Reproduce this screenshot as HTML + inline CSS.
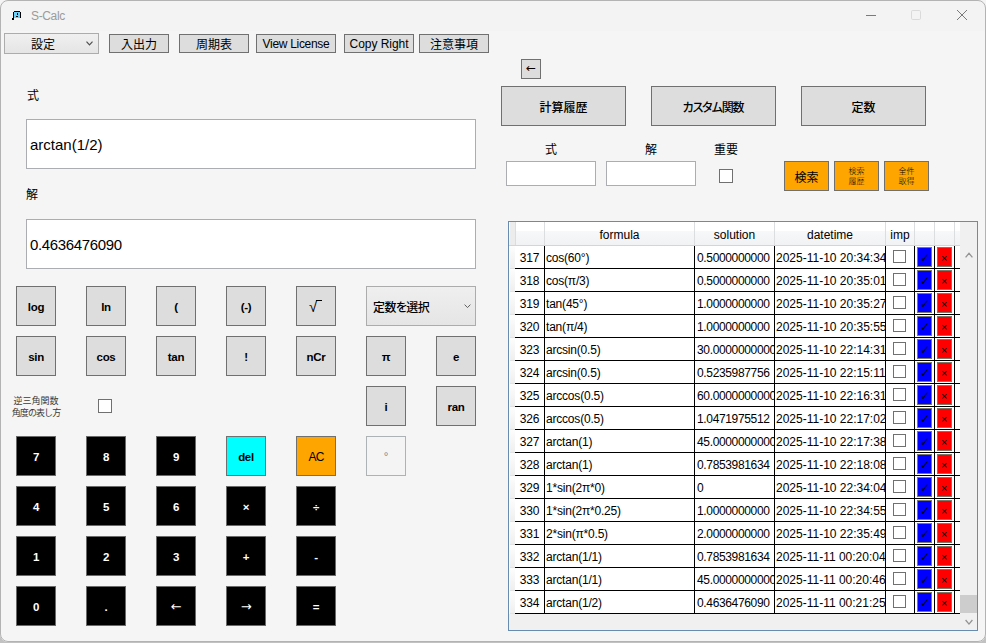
<!DOCTYPE html>
<html lang="ja"><head><meta charset="utf-8"><title>S-Calc</title>
<style>
*{box-sizing:border-box;margin:0;padding:0}
html,body{width:986px;height:643px;overflow:hidden;background:#f4f4f4}
body{font-family:"Liberation Sans","Noto Sans CJK JP",sans-serif;font-size:12px;color:#000;position:relative}
#win{position:absolute;left:0;top:0;width:986px;height:642px;background:#f5f5f5;border-radius:8px;overflow:hidden}
#frame{position:absolute;left:0;top:0;width:986px;height:642px;border:1px solid #b3b3b3;border-radius:8px;pointer-events:none}
#under{position:absolute;left:0;top:633px;width:986px;height:10px;background:#c2c2c2}
#tbar{position:absolute;left:0;top:0;width:986px;height:31px;background:#f3f3f3}
.abs{position:absolute}
#title{position:absolute;left:31px;top:8px;font-size:12px;color:#9b9b9b;line-height:16px;letter-spacing:-0.35px}
.btn{position:absolute;border:1px solid #707070;background:#ddd;display:flex;align-items:center;justify-content:center;white-space:nowrap;line-height:1}
.k{width:40px;height:40px;font-weight:bold;font-size:11.5px;letter-spacing:-0.3px;padding-top:4px}
.ar{font-family:'DejaVu Sans',sans-serif;font-weight:normal;font-size:13px;position:relative;top:-2px}
.blk{background:#000;color:#fff;border-color:#6a6a6a}
.combo{position:absolute;border:1px solid #acacac;background:linear-gradient(#f0f0f0,#e5e5e5)}
.tb{position:absolute;border:1px solid #abadb3;background:#fff;display:flex;align-items:center;white-space:nowrap}
.lbl{position:absolute;white-space:nowrap;line-height:1}
.chk{position:absolute;width:14px;height:14px;border:1px solid #707070;background:#fff}
.or{background:#ffa500}
.sm{font-size:8px;line-height:10px;text-align:center;color:#000;padding-top:2px;font-weight:300}
#dg{position:absolute;left:508px;top:221px;width:470px;height:410px;border:1px solid #688caf;background:#f0f0f0;overflow:hidden}
#dg .hdr{position:absolute;left:0;top:0;height:24px;width:451px;background:linear-gradient(#fff 0%,#fff 40.9%,#f7f8fa 40.9%,#f1f2f4 100%);border-bottom:1px solid #d5d5d5}
#dg .h{position:absolute;top:0;height:23px;border-right:1px solid #dcdddf;display:flex;align-items:center;justify-content:center;font-size:12px;line-height:1;padding-top:2px}
.row{position:absolute;left:0;height:23px;width:451px;background:#fff}
.row .rh{position:absolute;left:1px;top:0;width:5px;height:23px;background:linear-gradient(#fdfdfd,#efefef);border-bottom:1px solid #e2e2e2}
.row .c{position:absolute;top:0;height:23px;border-right:1px solid #000;border-bottom:1px solid #000;background:#fff;font-size:12px;line-height:23px;padding-top:1px;white-space:nowrap;overflow:hidden;letter-spacing:-0.2px}
.row .c0{left:6px;width:30px;text-align:center}
.row .c1{left:36px;width:150px;padding-left:1px}
.row .c2{left:186px;width:80px;padding-left:2px;letter-spacing:-0.35px}
.row .c3{left:266px;width:111px;padding-left:1px;letter-spacing:0}
.row .c4{left:377px;width:29px}
.row .c5{left:406px;width:20px}
.row .c6{left:426px;width:20px}
.row .c7{left:446px;width:5px;border-right:0}
.cb{position:absolute;left:7px;top:4px;width:13px;height:13px;border:1px solid #707070;background:#fff}
.bl,.rd{position:absolute;left:2px;top:1px;width:15px;height:20px;border:1px solid #7a7a6a;display:block}
.bl{background:#0000ff}.rd{background:#ff0000}
.bl u,.rd u{position:absolute;text-decoration:none;font-weight:normal;line-height:1;letter-spacing:0}
.bl u{font-family:'DejaVu Sans',sans-serif;font-size:12px;left:2px;top:4px}
.rd u{font-size:11px;left:3px;top:5px}
#vsb{position:absolute;left:451px;top:0;width:17px;height:408px;background:#f0f0f0}
#thumb{position:absolute;left:0;top:373px;width:17px;height:18px;background:#cdcdcd}
</style></head>
<body>
<div id="under"></div>
<div id="win">
<div id="tbar"></div>
<svg class="abs" style="left:12px;top:11px" width="10" height="10" viewBox="0 0 10 10" shape-rendering="crispEdges"><rect x="2" y="1" width="6" height="6.4" fill="#6dcff6"/><rect x="2" y="0" width="6" height="1" fill="#000"/><rect x="1" y="1" width="1" height="7" fill="#000"/><rect x="8" y="1" width="1" height="6" fill="#000"/><rect x="0" y="7.4" width="2" height="1.8" fill="#000"/><rect x="5" y="2.3" width="1" height="1.4" fill="#000"/><rect x="4" y="5" width="2" height="1" fill="#000"/></svg>
<div id="title">S-Calc</div>
<svg class="abs" style="left:866px;top:9px" width="110" height="14" viewBox="0 0 110 14"><path d="M0 6.5 H10" stroke="#7a7a7a" stroke-width="1" fill="none"/><rect x="45.5" y="1.5" width="9" height="9" rx="1.2" fill="none" stroke="#dadada" stroke-width="1"/><path d="M91 1 L101 11 M101 1 L91 11" stroke="#7a7a7a" stroke-width="1" fill="none"/></svg>

<!-- toolbar -->
<div class="combo" style="left:4px;top:33px;width:95px;height:21px"><span style="position:absolute;left:0;width:76px;text-align:center;font-size:12px;line-height:19px;top:2px">設定</span><svg class="abs" style="left:81px;top:7px" width="7" height="5" viewBox="0 0 7 5"><path d="M0.5 0.6 L3.5 3.8 L6.5 0.6" fill="none" stroke="#505050" stroke-width="1.2"/></svg></div>
<div class="btn" style="left:109px;top:34px;width:60px;height:19px;padding-top:2px">入出力</div>
<div class="btn" style="left:179px;top:34px;width:70px;height:19px;padding-top:2px">周期表</div>
<div class="btn" style="left:256px;top:34px;width:80px;height:19px;letter-spacing:-0.3px">View License</div>
<div class="btn" style="left:344px;top:34px;width:70px;height:19px;letter-spacing:-0.05px">Copy Right</div>
<div class="btn" style="left:419px;top:34px;width:70px;height:19px;padding-top:2px">注意事項</div>

<!-- left panel -->
<div class="lbl" style="left:27px;top:90px">式</div>
<div class="tb" style="left:26px;top:119px;width:450px;height:50px;font-size:15px;padding-left:3px">arctan(1/2)</div>
<div class="lbl" style="left:26px;top:189px">解</div>
<div class="tb" style="left:26px;top:219px;width:450px;height:50px;font-size:15px;padding-left:3px;letter-spacing:-0.35px">0.4636476090</div>

<div class="btn k" style="left:16px;top:286px">log</div>
<div class="btn k" style="left:86px;top:286px">ln</div>
<div class="btn k" style="left:156px;top:286px">(</div>
<div class="btn k" style="left:226px;top:286px">(-)</div>
<div class="btn k" style="left:296px;top:286px;font-weight:normal;font-size:15px;padding-top:0"><span style="position:relative;left:-3px;top:0px">√<i style="position:absolute;left:7px;top:1px;width:6px;height:1px;background:#000"></i></span></div>
<div class="combo" style="left:366px;top:286px;width:110px;height:40px;background:linear-gradient(#efefef,#e5e5e5)"><span style="position:absolute;left:6px;top:0;line-height:38px;font-size:12px;font-weight:500;font-feature-settings:'palt';letter-spacing:-0.6px;top:2px">定数を選択</span><svg class="abs" style="left:97px;top:17px" width="7" height="5" viewBox="0 0 7 5"><path d="M0.6 0.6 L3.5 3.6 L6.4 0.6" fill="none" stroke="#606060" stroke-width="1"/></svg></div>

<div class="btn k" style="left:16px;top:336px">sin</div>
<div class="btn k" style="left:86px;top:336px">cos</div>
<div class="btn k" style="left:156px;top:336px">tan</div>
<div class="btn k" style="left:226px;top:336px">!</div>
<div class="btn k" style="left:296px;top:336px">nCr</div>
<div class="btn k" style="left:366px;top:336px">π</div>
<div class="btn k" style="left:436px;top:336px">e</div>

<div class="lbl" style="left:6px;top:396px;width:60px;text-align:center;font-size:9px;line-height:11.7px;color:#3a3a3a">逆三角関数<br><span style="letter-spacing:-0.9px">角度の表し方</span></div>
<div class="chk" style="left:98px;top:399px"></div>
<div class="btn k" style="left:366px;top:386px">i</div>
<div class="btn k" style="left:436px;top:386px">ran</div>

<div class="btn k blk" style="left:16px;top:436px">7</div>
<div class="btn k blk" style="left:86px;top:436px">8</div>
<div class="btn k blk" style="left:156px;top:436px">9</div>
<div class="btn k" style="left:226px;top:436px;background:#00ffff">del</div>
<div class="btn k" style="left:296px;top:436px;background:#ffa500;font-weight:normal;font-size:12px;letter-spacing:-0.8px;padding-top:1px">AC</div>
<div class="btn k" style="left:366px;top:436px;background:#f4f4f4;border-color:#adb2b5;color:#838383;font-weight:normal"><span style="position:relative;top:-1px">°</span></div>

<div class="btn k blk" style="left:16px;top:486px">4</div>
<div class="btn k blk" style="left:86px;top:486px">5</div>
<div class="btn k blk" style="left:156px;top:486px">6</div>
<div class="btn k blk" style="left:226px;top:486px">×</div>
<div class="btn k blk" style="left:296px;top:486px">÷</div>

<div class="btn k blk" style="left:16px;top:536px">1</div>
<div class="btn k blk" style="left:86px;top:536px">2</div>
<div class="btn k blk" style="left:156px;top:536px">3</div>
<div class="btn k blk" style="left:226px;top:536px">+</div>
<div class="btn k blk" style="left:296px;top:536px">-</div>

<div class="btn k blk" style="left:16px;top:586px">0</div>
<div class="btn k blk" style="left:86px;top:586px">.</div>
<div class="btn k blk" style="left:156px;top:586px"><span class="ar">←</span></div>
<div class="btn k blk" style="left:226px;top:586px"><span class="ar">→</span></div>
<div class="btn k blk" style="left:296px;top:586px">=</div>

<!-- right panel -->
<div class="btn" style="left:521px;top:59px;width:20px;height:20px"><span class="ar" style="font-size:12px;top:-1px">←</span></div>
<div class="btn" style="left:501px;top:86px;width:125px;height:40px;font-weight:500;padding-top:3px">計算履歴</div>
<div class="btn" style="left:651px;top:86px;width:125px;height:40px;font-weight:500;padding-top:3px;padding-right:1px;font-feature-settings:'palt';letter-spacing:-1.1px">カスタム関数</div>
<div class="btn" style="left:801px;top:86px;width:125px;height:40px;font-weight:500;padding-top:3px">定数</div>

<div class="lbl" style="left:506px;top:144px;width:90px;text-align:center">式</div>
<div class="lbl" style="left:606px;top:144px;width:90px;text-align:center">解</div>
<div class="lbl" style="left:696px;top:144px;width:60px;text-align:center">重要</div>
<div class="tb" style="left:506px;top:161px;width:90px;height:25px"></div>
<div class="tb" style="left:606px;top:161px;width:90px;height:25px"></div>
<div class="chk" style="left:719px;top:169px"></div>
<div class="btn or" style="left:784px;top:161px;width:45px;height:30px;padding-top:4px">検索</div>
<div class="btn or sm" style="left:834px;top:161px;width:45px;height:30px">検索<br>履歴</div>
<div class="btn or sm" style="left:884px;top:161px;width:45px;height:30px">全件<br>取得</div>

<div id="dg">
 <div class="hdr">
  <span class="h" style="left:1px;width:6px;background:#ececec"></span>
  <span class="h" style="left:6px;width:30px"></span>
  <span class="h" style="left:36px;width:150px">formula</span>
  <span class="h" style="left:186px;width:80px">solution</span>
  <span class="h" style="left:266px;width:111px">datetime</span>
  <span class="h" style="left:377px;width:29px">imp</span>
  <span class="h" style="left:406px;width:20px"></span>
  <span class="h" style="left:426px;width:20px"></span>
  <span class="h" style="left:446px;width:5px;border-right:0"></span>
 </div>
<div class="row" style="top:24px"><i class="rh"></i><span class="c c0">317</span><span class="c c1">cos(60°)</span><span class="c c2">0.5000000000</span><span class="c c3">2025-11-10 20:34:34</span><span class="c c4"><i class="cb"></i></span><span class="c c5"><b class="bl"><u>✓</u></b></span><span class="c c6"><b class="rd"><u>×</u></b></span><span class="c c7"></span></div>
<div class="row" style="top:47px"><i class="rh"></i><span class="c c0">318</span><span class="c c1">cos(π/3)</span><span class="c c2">0.5000000000</span><span class="c c3">2025-11-10 20:35:01</span><span class="c c4"><i class="cb"></i></span><span class="c c5"><b class="bl"><u>✓</u></b></span><span class="c c6"><b class="rd"><u>×</u></b></span><span class="c c7"></span></div>
<div class="row" style="top:70px"><i class="rh"></i><span class="c c0">319</span><span class="c c1">tan(45°)</span><span class="c c2">1.0000000000</span><span class="c c3">2025-11-10 20:35:27</span><span class="c c4"><i class="cb"></i></span><span class="c c5"><b class="bl"><u>✓</u></b></span><span class="c c6"><b class="rd"><u>×</u></b></span><span class="c c7"></span></div>
<div class="row" style="top:93px"><i class="rh"></i><span class="c c0">320</span><span class="c c1">tan(π/4)</span><span class="c c2">1.0000000000</span><span class="c c3">2025-11-10 20:35:55</span><span class="c c4"><i class="cb"></i></span><span class="c c5"><b class="bl"><u>✓</u></b></span><span class="c c6"><b class="rd"><u>×</u></b></span><span class="c c7"></span></div>
<div class="row" style="top:116px"><i class="rh"></i><span class="c c0">323</span><span class="c c1">arcsin(0.5)</span><span class="c c2">30.0000000000</span><span class="c c3">2025-11-10 22:14:31</span><span class="c c4"><i class="cb"></i></span><span class="c c5"><b class="bl"><u>✓</u></b></span><span class="c c6"><b class="rd"><u>×</u></b></span><span class="c c7"></span></div>
<div class="row" style="top:139px"><i class="rh"></i><span class="c c0">324</span><span class="c c1">arcsin(0.5)</span><span class="c c2">0.5235987756</span><span class="c c3">2025-11-10 22:15:11</span><span class="c c4"><i class="cb"></i></span><span class="c c5"><b class="bl"><u>✓</u></b></span><span class="c c6"><b class="rd"><u>×</u></b></span><span class="c c7"></span></div>
<div class="row" style="top:162px"><i class="rh"></i><span class="c c0">325</span><span class="c c1">arccos(0.5)</span><span class="c c2">60.0000000000</span><span class="c c3">2025-11-10 22:16:31</span><span class="c c4"><i class="cb"></i></span><span class="c c5"><b class="bl"><u>✓</u></b></span><span class="c c6"><b class="rd"><u>×</u></b></span><span class="c c7"></span></div>
<div class="row" style="top:185px"><i class="rh"></i><span class="c c0">326</span><span class="c c1">arccos(0.5)</span><span class="c c2">1.0471975512</span><span class="c c3">2025-11-10 22:17:02</span><span class="c c4"><i class="cb"></i></span><span class="c c5"><b class="bl"><u>✓</u></b></span><span class="c c6"><b class="rd"><u>×</u></b></span><span class="c c7"></span></div>
<div class="row" style="top:208px"><i class="rh"></i><span class="c c0">327</span><span class="c c1">arctan(1)</span><span class="c c2">45.0000000000</span><span class="c c3">2025-11-10 22:17:38</span><span class="c c4"><i class="cb"></i></span><span class="c c5"><b class="bl"><u>✓</u></b></span><span class="c c6"><b class="rd"><u>×</u></b></span><span class="c c7"></span></div>
<div class="row" style="top:231px"><i class="rh"></i><span class="c c0">328</span><span class="c c1">arctan(1)</span><span class="c c2">0.7853981634</span><span class="c c3">2025-11-10 22:18:08</span><span class="c c4"><i class="cb"></i></span><span class="c c5"><b class="bl"><u>✓</u></b></span><span class="c c6"><b class="rd"><u>×</u></b></span><span class="c c7"></span></div>
<div class="row" style="top:254px"><i class="rh"></i><span class="c c0">329</span><span class="c c1">1*sin(2π*0)</span><span class="c c2">0</span><span class="c c3">2025-11-10 22:34:04</span><span class="c c4"><i class="cb"></i></span><span class="c c5"><b class="bl"><u>✓</u></b></span><span class="c c6"><b class="rd"><u>×</u></b></span><span class="c c7"></span></div>
<div class="row" style="top:277px"><i class="rh"></i><span class="c c0">330</span><span class="c c1">1*sin(2π*0.25)</span><span class="c c2">1.0000000000</span><span class="c c3">2025-11-10 22:34:55</span><span class="c c4"><i class="cb"></i></span><span class="c c5"><b class="bl"><u>✓</u></b></span><span class="c c6"><b class="rd"><u>×</u></b></span><span class="c c7"></span></div>
<div class="row" style="top:300px"><i class="rh"></i><span class="c c0">331</span><span class="c c1">2*sin(π*0.5)</span><span class="c c2">2.0000000000</span><span class="c c3">2025-11-10 22:35:49</span><span class="c c4"><i class="cb"></i></span><span class="c c5"><b class="bl"><u>✓</u></b></span><span class="c c6"><b class="rd"><u>×</u></b></span><span class="c c7"></span></div>
<div class="row" style="top:323px"><i class="rh"></i><span class="c c0">332</span><span class="c c1">arctan(1/1)</span><span class="c c2">0.7853981634</span><span class="c c3">2025-11-11 00:20:04</span><span class="c c4"><i class="cb"></i></span><span class="c c5"><b class="bl"><u>✓</u></b></span><span class="c c6"><b class="rd"><u>×</u></b></span><span class="c c7"></span></div>
<div class="row" style="top:346px"><i class="rh"></i><span class="c c0">333</span><span class="c c1">arctan(1/1)</span><span class="c c2">45.0000000000</span><span class="c c3">2025-11-11 00:20:46</span><span class="c c4"><i class="cb"></i></span><span class="c c5"><b class="bl"><u>✓</u></b></span><span class="c c6"><b class="rd"><u>×</u></b></span><span class="c c7"></span></div>
<div class="row" style="top:369px"><i class="rh"></i><span class="c c0">334</span><span class="c c1">arctan(1/2)</span><span class="c c2">0.4636476090</span><span class="c c3">2025-11-11 00:21:25</span><span class="c c4"><i class="cb"></i></span><span class="c c5"><b class="bl"><u>✓</u></b></span><span class="c c6"><b class="rd"><u>×</u></b></span><span class="c c7"></span></div>
 <div id="vsb"><div id="thumb"></div>
 <svg class="abs" style="left:5px;top:30px" width="8" height="7" viewBox="0 0 8 7"><path d="M0.6 5.4 L4 1.3 L7.4 5.4" fill="none" stroke="#939393" stroke-width="1.3"/></svg>
 <svg class="abs" style="left:5px;top:397px" width="8" height="7" viewBox="0 0 8 7"><path d="M0.6 1 L4 5.1 L7.4 1" fill="none" stroke="#939393" stroke-width="1.3"/></svg>
 </div>
</div>
</div>
<div id="frame"></div>

</body></html>
